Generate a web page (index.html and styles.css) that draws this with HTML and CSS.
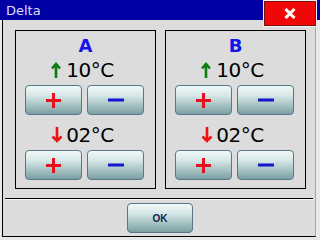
FILE: index.html
```html
<!DOCTYPE html>
<html lang="en">
<head>
    <meta charset="UTF-8">
    <meta name="viewport" content="width=device-width, initial-scale=1.0">
    <title>Delta</title>
    <link rel="stylesheet" href="styles.css">
</head>
<body>
    <div class="titlebar">
        <span class="title">Delta</span>
        <button class="close" aria-label="Close">
            <svg width="12" height="11" viewBox="0 0 12 11"><path d="M1.5 1 L10.5 10 M10.5 1 L1.5 10" stroke="#fff" stroke-width="3"/></svg>
        </button>
    </div>

    <div class="window">
        <div class="panels">
            <section class="panel">
                <h2 class="label">A</h2>
                <div class="temp">
                    <svg class="arrow" width="10" height="16" viewBox="0 0 10 16"><path d="M5 2 L5 16 M1 6.5 L5 2 L9 6.5" stroke="#0b7d12" stroke-width="2.6" fill="none"/></svg>
                    <span>10°C</span>
                </div>
                <div class="buttons">
                    <button class="btn"><svg width="15" height="15" viewBox="0 0 15 15"><path d="M7.5 0 V15 M0 7.5 H15" stroke="#e8101a" stroke-width="3"/></svg></button>
                    <button class="btn"><svg width="16" height="4" viewBox="0 0 16 4"><path d="M0 2 H16" stroke="#1515cc" stroke-width="3"/></svg></button>
                </div>
                <div class="temp low">
                    <svg class="arrow" width="12" height="16" viewBox="0 0 12 16"><path d="M6 0 L6 14 M1.5 9.5 L6 14 L10.5 9.5" stroke="#ee1010" stroke-width="2.6" fill="none"/></svg>
                    <span>02°C</span>
                </div>
                <div class="buttons">
                    <button class="btn"><svg width="15" height="15" viewBox="0 0 15 15"><path d="M7.5 0 V15 M0 7.5 H15" stroke="#e8101a" stroke-width="3"/></svg></button>
                    <button class="btn"><svg width="16" height="4" viewBox="0 0 16 4"><path d="M0 2 H16" stroke="#1515cc" stroke-width="3"/></svg></button>
                </div>
            </section>

            <section class="panel">
                <h2 class="label">B</h2>
                <div class="temp">
                    <svg class="arrow" width="10" height="16" viewBox="0 0 10 16"><path d="M5 2 L5 16 M1 6.5 L5 2 L9 6.5" stroke="#0b7d12" stroke-width="2.6" fill="none"/></svg>
                    <span>10°C</span>
                </div>
                <div class="buttons">
                    <button class="btn"><svg width="15" height="15" viewBox="0 0 15 15"><path d="M7.5 0 V15 M0 7.5 H15" stroke="#e8101a" stroke-width="3"/></svg></button>
                    <button class="btn"><svg width="16" height="4" viewBox="0 0 16 4"><path d="M0 2 H16" stroke="#1515cc" stroke-width="3"/></svg></button>
                </div>
                <div class="temp low">
                    <svg class="arrow" width="12" height="16" viewBox="0 0 12 16"><path d="M6 0 L6 14 M1.5 9.5 L6 14 L10.5 9.5" stroke="#ee1010" stroke-width="2.6" fill="none"/></svg>
                    <span>02°C</span>
                </div>
                <div class="buttons">
                    <button class="btn"><svg width="15" height="15" viewBox="0 0 15 15"><path d="M7.5 0 V15 M0 7.5 H15" stroke="#e8101a" stroke-width="3"/></svg></button>
                    <button class="btn"><svg width="16" height="4" viewBox="0 0 16 4"><path d="M0 2 H16" stroke="#1515cc" stroke-width="3"/></svg></button>
                </div>
            </section>
        </div>

        <div class="separator"></div>

        <div class="footer">
            <button class="btn ok">OK</button>
        </div>
    </div>
</body>
</html>
```

FILE: styles.css
```css
body {
    margin: 0;
    width: 320px;
    height: 240px;
    overflow: hidden;
    background-color: #e8e8e8;
    font-family: 'DejaVu Sans', sans-serif;
    position: relative;
}

.titlebar {
    height: 20px;
    background-color: #0000a4;
    padding-left: 6px;
}

.title {
    font-size: 13px;
    line-height: 20px;
    color: #dcdcff;
}

.close {
    position: absolute;
    top: 1px;
    left: 264px;
    width: 52px;
    height: 25px;
    padding: 0;
    border: 1px solid #7a1010;
    background-color: #f00808;
    box-shadow: 0 0 0 1px #f2f2f2;
    display: flex;
    justify-content: center;
    align-items: center;
}

.window {
    margin-left: 2px;
    width: 312px;
    height: 206px;
    background-color: #dcdcdc;
    border-left: 1px solid #000;
    border-right: 1px solid #a8a8a8;
    border-bottom: 1px solid #000;
    padding-top: 10px;
    display: flex;
    flex-direction: column;
}

.panels {
    display: flex;
    gap: 9px;
    padding-left: 12px;
}

.panel {
    width: 141px;
    height: 159px;
    border: 1px solid #000;
    padding-top: 5px;
    box-sizing: border-box;
}

.label {
    margin: 0;
    font-size: 18px;
    font-weight: bold;
    line-height: 20px;
    text-align: center;
    color: #1414e6;
}

.temp {
    display: flex;
    justify-content: center;
    align-items: center;
    margin-top: 3px;
    height: 22px;
    font-size: 20px;
    letter-spacing: -0.5px;
    line-height: 22px;
    color: #000;
    padding-right: 6px;
}

.temp .arrow {
    margin-right: 5px;
}

.temp.low {
    margin-top: 9px;
}

.temp.low .arrow {
    margin-right: 3px;
}

.buttons {
    display: flex;
    gap: 5px;
    padding-left: 9px;
    margin-top: 4px;
}

.btn {
    width: 57px;
    height: 30px;
    padding: 0;
    border: 1px solid #56778a;
    border-radius: 4px;
    background: linear-gradient(#f2fafa, #d4e6e6 35%, #7b9fa2);
    display: flex;
    justify-content: center;
    align-items: center;
}

.separator {
    margin: 9px 2px 0;
    height: 1px;
    background-color: #000;
    border-bottom: 1px solid #f4f4f4;
}

.footer {
    display: flex;
    justify-content: center;
    margin-top: 3px;
    padding-left: 2px;
}

.btn.ok {
    width: 66px;
    font-family: 'Liberation Sans', sans-serif;
    font-size: 10px;
    font-weight: bold;
    color: #14234a;
}
```
